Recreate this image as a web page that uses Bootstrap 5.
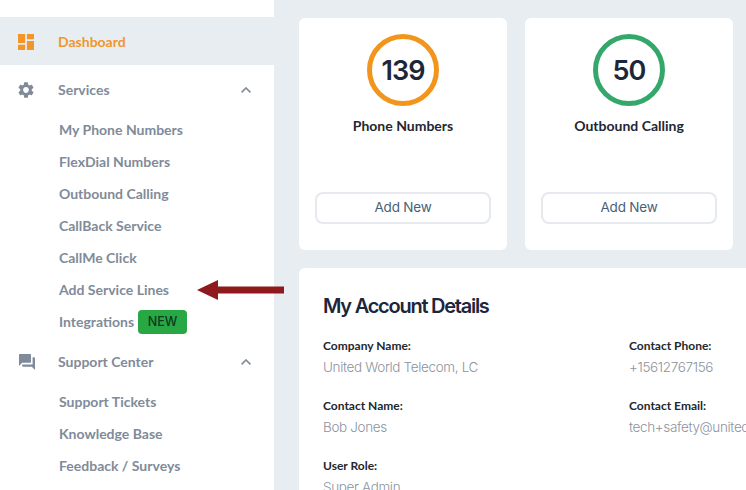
<!DOCTYPE html>
<html>
<head>
<meta charset="utf-8">
<title>Dashboard</title>
<link href="https://cdn.jsdelivr.net/npm/bootstrap@5.3.3/dist/css/bootstrap.min.css" rel="stylesheet">
<script src="https://cdn.jsdelivr.net/npm/bootstrap@5.3.3/dist/js/bootstrap.bundle.min.js"></script>
<style>
html, body { height: 490px; overflow: hidden; }
body { background-color: #e8edf1; font-family: "Lato", sans-serif; position: relative; }
.side-panel { width: 274px; height: 490px; background: #fff; padding-top: 17px; flex-shrink: 0; }
.side-head { height: 48px; padding: 2px 23px 0 18px; color: #808b9a; font-size: 14px; font-weight: 700; }
.side-head.current { background: #e8edf1; color: #f2962a; }
.side-head .side-text { margin: 0 0 2px 24px; }
.side-head svg.side-icon { width: 16px; height: 16px; flex-shrink: 0; overflow: visible; }
.side-head svg.support-icon { width: 18px; }
.side-head .support-icon + .side-text { margin-left: 22px; }
.side-link { height: 32px; padding-left: 59px; color: #808b9a; font-size: 14px; font-weight: 700; text-decoration: none; }
.new-tag { background: #28a745; color: #0c3a1c; font-family: "Inter", sans-serif; font-size: 12.5px; font-weight: 500; border-radius: 4px; width: 49px; height: 24px; margin: 2px 0 0 4px; }
.main-panel { padding: 18px 0 0 25px; flex-grow: 1; overflow: hidden; }
.stat-box { width: 208px; height: 232px; background: #fff; border-radius: 6px; padding: 16px 16px 26px; }
.stat-ring { width: 72px; height: 72px; border-radius: 50%; border: 5px solid; padding-top: 2px; font-family: "Inter", sans-serif; font-size: 27px; font-weight: 600; color: #1e2639; letter-spacing: -1px; }
.ring-orange { border-color: #f2951c; }
.ring-green { border-color: #34a86b; }
.stat-label { color: #23272e; font-size: 14px; font-weight: 700; margin-top: 9px; }
.add-btn { height: 32px; border: 2px solid #e6e9ee; border-radius: 8px; background: #fff; color: #4a5f76; font-family: "Inter", sans-serif; font-size: 13.5px; letter-spacing: -0.2px; padding: 0; line-height: 1; }
.add-btn:hover { border-color: #e6e9ee; color: #4a5f76; }
.account-box { width: 600px; height: 300px; background: #fff; border-radius: 6px 0 0 0; margin-top: 18px; padding: 24px; }
.account-title { font-family: "Inter", sans-serif; font-size: 20px; font-weight: 600; letter-spacing: -1.25px; color: #1e2639; line-height: 28px; margin: 0 0 18px; }
.info-grid { display: grid; grid-template-columns: 306px 1fr; grid-auto-rows: 60px; }
.info-label { color: #23272e; font-size: 12px; font-weight: 700; line-height: 16px; }
.info-value { color: #8c93a0; font-family: "Inter", sans-serif; font-size: 13.5px; font-weight: 300; letter-spacing: -0.35px; line-height: 20px; margin-top: 3px; white-space: nowrap; }
.red-arrow { position: absolute; left: 197px; top: 279px; }
</style>
</head>
<body>
<div class="d-flex">
    <div class="side-panel">
        <div class="side-head current d-flex align-items-center">
            <svg class="side-icon" viewBox="3 3 18 18" fill="#f2962a"><path d="M3 13h8V3H3v10zm0 8h8v-6H3v6zm10 0h8V11h-8v10zm0-18v6h8V3h-8z"/></svg>
            <span class="side-text">Dashboard</span>
        </div>
        <div class="side-head d-flex align-items-center">
            <svg class="side-icon" viewBox="2.5 2 19 20" fill="#808b9a"><path d="M19.14 12.94c.04-.3.06-.61.06-.94 0-.32-.02-.64-.07-.94l2.03-1.58a.49.49 0 0 0 .12-.61l-1.92-3.32a.488.488 0 0 0-.59-.22l-2.39.96c-.5-.38-1.03-.7-1.62-.94l-.36-2.54a.484.484 0 0 0-.48-.41h-3.84c-.24 0-.43.17-.47.41l-.36 2.54c-.59.24-1.13.57-1.62.94l-2.39-.96c-.22-.08-.47 0-.59.22L2.74 8.87c-.12.21-.08.47.12.61l2.03 1.58c-.05.3-.09.63-.09.94s.02.64.07.94l-2.03 1.58a.49.49 0 0 0-.12.61l1.92 3.32c.12.22.37.29.59.22l2.39-.96c.5.38 1.03.7 1.62.94l.36 2.54c.05.24.24.41.48.41h3.84c.24 0 .44-.17.47-.41l.36-2.54c.59-.24 1.13-.56 1.62-.94l2.39.96c.22.08.47 0 .59-.22l1.92-3.32c.12-.22.07-.47-.12-.61l-2.01-1.58zM12 15.6c-1.98 0-3.6-1.62-3.6-3.6s1.62-3.6 3.6-3.6 3.6 1.62 3.6 3.6-1.62 3.6-3.6 3.6z"/></svg>
            <span class="side-text flex-grow-1">Services</span>
            <svg width="10" height="6" viewBox="0 0 10 6" fill="none" stroke="#808b9a" stroke-width="1.6"><path d="M.6 5.4 5 1l4.4 4.4"/></svg>
        </div>
        <a class="side-link d-flex align-items-center" href="#">My Phone Numbers</a>
        <a class="side-link d-flex align-items-center" href="#">FlexDial Numbers</a>
        <a class="side-link d-flex align-items-center" href="#">Outbound Calling</a>
        <a class="side-link d-flex align-items-center" href="#">CallBack Service</a>
        <a class="side-link d-flex align-items-center" href="#">CallMe Click</a>
        <a class="side-link d-flex align-items-center" href="#">Add Service Lines</a>
        <a class="side-link d-flex align-items-center" href="#">Integrations <span class="new-tag d-flex align-items-center justify-content-center">NEW</span></a>
        <div class="side-head d-flex align-items-center">
            <svg class="side-icon support-icon" viewBox="2 2 20 20" fill="#808b9a"><path d="M21 6h-2v9H6v2c0 .55.45 1 1 1h11l4 4V7c0-.55-.45-1-1-1zm-4 6V3c0-.55-.45-1-1-1H3c-.55 0-1 .45-1 1v14l4-4h10c.55 0 1-.45 1-1z"/></svg>
            <span class="side-text flex-grow-1">Support Center</span>
            <svg width="10" height="6" viewBox="0 0 10 6" fill="none" stroke="#808b9a" stroke-width="1.6"><path d="M.6 5.4 5 1l4.4 4.4"/></svg>
        </div>
        <a class="side-link d-flex align-items-center" href="#">Support Tickets</a>
        <a class="side-link d-flex align-items-center" href="#">Knowledge Base</a>
        <a class="side-link d-flex align-items-center" href="#">Feedback / Surveys</a>
    </div>
    <div class="main-panel">
        <div class="d-flex" style="gap:18px">
            <div class="stat-box d-flex flex-column align-items-center">
                <div class="stat-ring ring-orange d-flex align-items-center justify-content-center">139</div>
                <div class="stat-label">Phone Numbers</div>
                <button class="btn add-btn w-100 mt-auto">Add New</button>
            </div>
            <div class="stat-box d-flex flex-column align-items-center">
                <div class="stat-ring ring-green d-flex align-items-center justify-content-center">50</div>
                <div class="stat-label">Outbound Calling</div>
                <button class="btn add-btn w-100 mt-auto">Add New</button>
            </div>
        </div>
        <div class="account-box">
            <h5 class="account-title">My Account Details</h5>
            <div class="info-grid">
                <div>
                    <div class="info-label">Company Name:</div>
                    <div class="info-value">United World Telecom, LC</div>
                </div>
                <div>
                    <div class="info-label">Contact Phone:</div>
                    <div class="info-value">+15612767156</div>
                </div>
                <div>
                    <div class="info-label">Contact Name:</div>
                    <div class="info-value">Bob Jones</div>
                </div>
                <div>
                    <div class="info-label">Contact Email:</div>
                    <div class="info-value">tech+safety@unitedworldtelecom.com</div>
                </div>
                <div>
                    <div class="info-label">User Role:</div>
                    <div class="info-value">Super Admin</div>
                </div>
            </div>
        </div>
    </div>
</div>
<svg class="red-arrow" width="87" height="22" viewBox="0 0 87 22"><path d="M0 11 21 1v6.5h66v7H21V21z" fill="#8f1a1d"/></svg>
</body>
</html>
